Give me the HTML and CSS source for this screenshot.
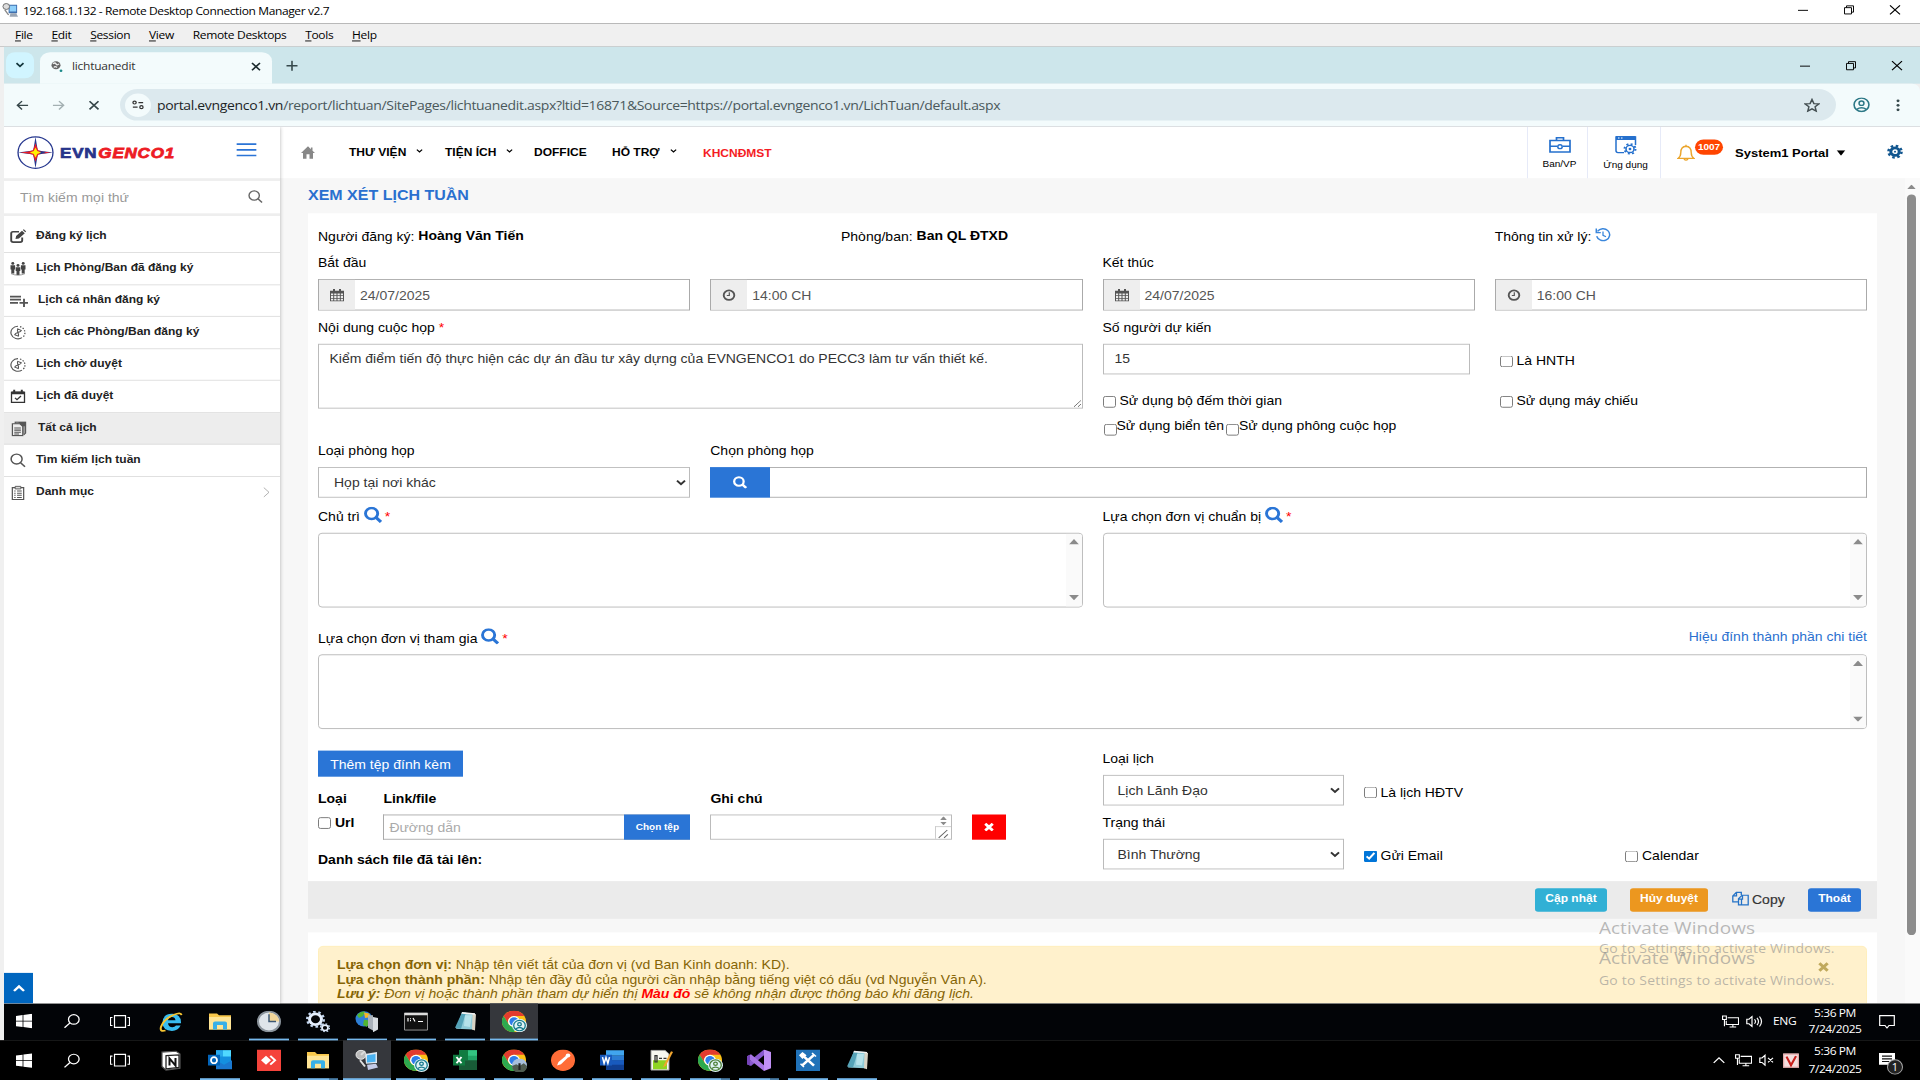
FILE: index.html
```html
<!DOCTYPE html>
<html lang="vi">
<head>
<meta charset="utf-8">
<title>lichtuanedit</title>
<link rel="stylesheet" href="styles.css">
</head>
<body>
<svg class="defs" width="0" height="0" aria-hidden="true">
  <defs>
    <symbol id="search" viewBox="0 0 16 16"><circle cx="6.6" cy="6.6" r="5.5" fill="none" stroke="currentColor" stroke-width="1.5"/><path d="M10.6 10.6 15 15" stroke="currentColor" stroke-width="1.6"/></symbol>
    <symbol id="search-bold" viewBox="0 0 18 18"><circle cx="7.6" cy="7.6" r="6.100" fill="none" stroke="currentColor" stroke-width="2.900"/><path d="M11.5 11.5 17 17" stroke="currentColor" stroke-width="3.300"/></symbol>
    <symbol id="chev" viewBox="0 0 8 6"><path d="M1 1l3 3 3-3" fill="none" stroke="currentColor" stroke-width="1.5"/></symbol>
    <symbol id="tri-up" viewBox="0 0 10 6"><path d="M0 6 5 0l5 6z" fill="#8b8b8b"/></symbol>
    <symbol id="tri-down" viewBox="0 0 10 6"><path d="M0 0h10L5 6z" fill="#8b8b8b"/></symbol>
    <symbol id="calendar" viewBox="0 0 14 14"><path d="M0 2h14v12H0z" fill="#555"/><path d="M3 0h2v3H3zM9 0h2v3H9z" fill="#555"/><path d="M1 5h2.2v2H1zm3.2 0h2.3v2H4.200zm3.300 0h2.300v2H7.500zm3.300 0H13v2h-2.200zM1 8h2.200v2H1zm3.200 0h2.300v2H4.200zm3.300 0h2.300v2H7.500zm3.300 0H13v2h-2.200zM1 11h2.200v2H1zm3.200 0h2.300v2H4.200zm3.300 0h2.300v2H7.500zm3.300 0H13v2h-2.200z" fill="#eee"/></symbol>
    <symbol id="clock" viewBox="0 0 14 14"><circle cx="7" cy="7" r="5.3" fill="none" stroke="#555" stroke-width="1.9"/><path d="M7.300 3.800v3.600H4.800" fill="none" stroke="#555" stroke-width="1.200"/></symbol>
    <symbol id="win-min" viewBox="0 0 12 12"><path d="M1 6.500h10" stroke="currentColor"/></symbol>
    <symbol id="win-max" viewBox="0 0 12 12"><path d="M1.500 3.500h7v7h-7zM3.500 3.500v-2h7v7h-2" fill="none" stroke="currentColor"/></symbol>
    <symbol id="win-x" viewBox="0 0 12 12"><path d="M1 1l10 10M11 1 1 11" stroke="currentColor" stroke-width="1.200"/></symbol>
    <symbol id="timer" viewBox="0 0 16 16"><path d="M8 1a7 7 0 1 0 4 12.700" fill="none" stroke="#555" stroke-width="1.200"/><path d="M10 1.400a7 7 0 0 1 2.500 12" fill="none" stroke="#555" stroke-width="1.300" stroke-dasharray="1.500 1.500"/><path d="M5.500 4.500h5M5.500 11.500h5M6 4.500c0 3 4 4 4 7M10 4.500c0 3-4 4-4 7" fill="none" stroke="#555" stroke-width="1.100" transform="rotate(25 8 8)"/></symbol>
    <symbol id="windows" viewBox="0 0 16 16"><path d="M0 2.300 6.600 1.400v6.200H0zM7.400 1.300 16 0v7.600H7.400zM0 8.400h6.600v6.200L0 13.700zM7.400 8.400H16V16l-8.600-1.300z" fill="#fff"/></symbol>
    <symbol id="tb-search" viewBox="0 0 16 16"><circle cx="9.800" cy="6.200" r="5.300" fill="none" stroke="#fff" stroke-width="1.300"/><path d="M6 10 .5 15.500" stroke="#fff" stroke-width="1.400"/></symbol>
    <symbol id="taskview" viewBox="0 0 20 16"><path d="M4.500 1.500h11v13h-11zM2.500 3.500h-2v9h2M17.500 3.500h2v9h-2" fill="none" stroke="#fff" stroke-width="1.200"/></symbol>
    <symbol id="folder" viewBox="0 0 24 24"><path d="M1 3h8l2 2h12v16H1z" fill="#f8c84c"/><path d="M1 7h22v14H1z" fill="#ffe596"/><path d="M5 21v-7q0-2 2-2h10q2 0 2 2v7h-4v-5H9v5z" fill="#38b0e8"/></symbol>
    <symbol id="chrome" viewBox="0 0 24 24"><circle cx="12" cy="12" r="12" fill="#fbc116"/><path d="M1.600 6A12 12 0 0 1 22.400 6H12a6 6 0 0 0-5.200 9z" fill="#e33b2e"/><path d="M1.600 6A12 12 0 0 0 12 24l5.200-9A6 6 0 0 1 6.800 15z" fill="#2da94f"/><circle cx="12" cy="12" r="6" fill="#fff"/><circle cx="12" cy="12" r="4.600" fill="#2f7de9"/></symbol>
    <symbol id="profile" viewBox="0 0 14 14"><circle cx="7" cy="7" r="7" fill="#dff3f6"/><circle cx="7" cy="7" r="5.400" fill="none" stroke="currentColor" stroke-width="1.200"/><circle cx="7" cy="5.600" r="1.700" fill="none" stroke="currentColor" stroke-width="1.200"/><path d="M3.500 10.500q3.500-3 7 0" fill="none" stroke="currentColor" stroke-width="1.300"/></symbol>
    <symbol id="notepad" viewBox="0 0 24 24"><path d="M9 2 22 3l-2 18-17-1z" fill="#8fcbd8"/><path d="M9 2h4L8 20l-6-1z" fill="#55a3b8"/><path d="M12 5h7l-2 13-6-1z" fill="#b5e2ea"/><path d="M19.500 3l3.500 1-1 18-3-1z" fill="#d8d3c4"/><path d="M9 1.500l13 1.300v1.600L8.500 3.500z" fill="#f1f1f1"/></symbol>
    <symbol id="network" viewBox="0 0 18 16"><path d="M6 3.500h11.500v8H4.500V7M8 14.500h7M11.500 11.500v3" fill="none" stroke="#fff" stroke-width="1.200"/><path d="M.6 1.600h4v4h-4zM2.600 5.600v8" fill="none" stroke="#fff" stroke-width="1.200"/></symbol>
    <symbol id="cross" viewBox="0 0 12 12"><path d="M1.500 1.500l9 9M10.500 1.500l-9 9" stroke="currentColor" stroke-width="3.400"/></symbol>
  </defs>
</svg>

<div class="screen">
  <header class="rdc-title">
    <svg class="rdc-icon" viewBox="0 0 18 18"><path d="M7 3h9v10H7z" fill="#3f6fae"/><path d="M8 4h7v7H8z" fill="#8fd0fa"/><path d="M9 13h6l2 4H8z" fill="#9aa6b5"/><circle cx="4.500" cy="5" r="3.500" fill="#ddd" stroke="#666"/><path d="M3 9l4 6" stroke="#888" stroke-width="1.500"/></svg>
    <span class="rdc-name">192.168.1.132 - Remote Desktop Connection Manager v2.7</span>
    <span class="win-buttons"><svg><use href="#win-min"/></svg><svg><use href="#win-max"/></svg><svg><use href="#win-x"/></svg></span>
  </header>
  <nav class="rdc-menu">
    <span><u>F</u>ile</span><span><u>E</u>dit</span><span><u>S</u>ession</span><span><u>V</u>iew</span><span>Remote Desktops</span><span><u>T</u>ools</span><span><u>H</u>elp</span>
  </nav>

  <div class="remote">
    <div class="tabs">
      <span class="tab-list"><svg><use href="#chev"/></svg></span>
      <div class="tab">
        <svg class="tab-fav" viewBox="0 0 12 13"><circle cx="5" cy="5.500" r="4.500" fill="#666"/><path d="M2 4q2-2 3 0t3 0M3 8q1-2 3 0" stroke="#eee" fill="none" stroke-width="1.400"/><circle cx="10" cy="11.500" r="1.400" fill="#1c8a8a"/></svg>
        <span class="tab-name">lichtuanedit</span>
        <svg class="tab-x" viewBox="0 0 10 10"><path d="M1 1l8 8M9 1 1 9" stroke="#1c2b2e" stroke-width="1.700"/></svg>
      </div>
      <svg class="tab-plus" viewBox="0 0 12 12"><path d="M6 .5v11M.5 6h11" stroke="#36494c" stroke-width="1.600"/></svg>
      <span class="win-buttons inner"><svg><use href="#win-min"/></svg><svg><use href="#win-max"/></svg><svg><use href="#win-x"/></svg></span>
    </div>
    <div class="toolbar">
      <svg class="t-back" viewBox="0 0 14 12"><path d="M13 6H2M6.500 1 1.500 6l5 5" fill="none" stroke="#37474a" stroke-width="1.600"/></svg>
      <svg class="t-fwd" viewBox="0 0 14 12"><path d="M1 6h11M7.500 1l5 5-5 5" fill="none" stroke="#a3b0b2" stroke-width="1.600"/></svg>
      <svg class="t-stop" viewBox="0 0 12 12"><path d="M1.500 1.500l9 9M10.500 1.500l-9 9" stroke="#37474a" stroke-width="1.700"/></svg>
      <div class="omnibox">
        <span class="site-info"><svg viewBox="0 0 14 12"><circle cx="3" cy="3" r="1.900" fill="none" stroke="#333" stroke-width="1.500"/><path d="M7.500 3H13M1 9h5.500" stroke="#333" stroke-width="1.600"/><circle cx="11" cy="9" r="1.900" fill="none" stroke="#333" stroke-width="1.500"/></svg></span>
        <span class="url"><b>portal.evngenco1.vn</b>/report/lichtuan/SitePages/lichtuanedit.aspx?ltid=16871&amp;Source=https://portal.evngenco1.vn/LichTuan/default.aspx</span>
        <svg class="t-star" viewBox="0 0 16 16"><path d="M8 1.500l1.900 4.600 4.900.4-3.700 3.200 1.100 4.800L8 12l-4.200 2.500 1.100-4.800L1.200 6.500l4.900-.4z" fill="none" stroke="#444f52" stroke-width="1.500"/></svg>
      </div>
      <svg class="t-user" viewBox="0 0 16 16"><circle cx="8" cy="8" r="7" fill="none" stroke="#2c7886" stroke-width="1.500"/><circle cx="8" cy="6.300" r="2.300" fill="none" stroke="#2c7886" stroke-width="1.400"/><path d="M3.500 12.800q4.500-3.500 9 0" fill="none" stroke="#2c7886" stroke-width="1.600"/></svg>
      <svg class="t-more" viewBox="0 0 4 14"><circle cx="2" cy="2" r="1.500"/><circle cx="2" cy="7" r="1.500"/><circle cx="2" cy="12" r="1.500"/></svg>
    </div>

    <div class="portal">
      <aside class="side">
        <div class="brand">
          <svg class="brand-mark" viewBox="0 0 36 36"><circle cx="18" cy="18" r="17" fill="#fff" stroke="#27388f" stroke-width="1.300"/><path d="M18 1l2.200 14.800L35 18l-14.800 2.200L18 35l-2.200-14.800L1 18l14.800-2.200z" fill="#27388f"/><path d="M18 8l2.500 7.500L28 18l-7.500 2.500L18 28l-2.500-7.500L8 18l7.500-2.500zM3 18l11-1.500v3zM33 18l-11-1.500v3z" fill="#ed1c24"/><path d="M18 12.500l1.700 3.800 3.800 1.700-3.800 1.700-1.700 3.800-1.700-3.800-3.800-1.700 3.800-1.700z" fill="#fff200"/></svg>
          <span class="brand-name"><b>EVN</b><i>GENCO1</i></span>
          <svg class="burger" viewBox="0 0 21 16"><path d="M0 1.200h21M0 8h21M0 14.800h21" stroke="#2b74d6" stroke-width="1.900"/></svg>
        </div>
        <div class="side-search"><span>Tìm kiếm mọi thứ</span><svg><use href="#search"/></svg></div>
        <ul class="menu">
          <li><svg viewBox="0 0 16 16"><path d="M9 3H3Q1.200 3 1.200 5v7.500q0 2 2 2h7q2 0 2-2V9.500" fill="none" stroke="#444" stroke-width="1.900"/><path d="M5.500 11l.6-3.300L12 1.800l2.800 2.800-5.900 5.800zM12.800 1l1-.9 2.300 2.500-.8.900z" fill="#444"/></svg><span>Đăng ký lịch</span></li>
          <li><svg viewBox="0 0 16 16"><g fill="#444"><circle cx="2.800" cy="2.200" r="1.500"/><circle cx="13.200" cy="2.200" r="1.500"/><circle cx="8" cy="4.400" r="1.500"/><path d="M.5 4.200h4.600V9H4.300v4.500h-3V9H.5zM10.900 4.200h4.600V9h-.8v4.500h-3V9h-.8zM5.700 6.400h4.600v4.300h-.8V15h-3v-4.300h-.8z"/></g><path d="M1 13.500Q8 17 15 13.500" fill="none" stroke="#777" stroke-width=".8"/></svg><span>Lịch Phòng/Ban đã đăng ký</span></li>
          <li class="wide"><svg viewBox="0 0 18 14"><path d="M0 2h11M0 5.500h11M0 9h8M14 4.500v9M9.500 9H18" stroke="#555" stroke-width="1.900"/></svg><span>Lịch cá nhân đăng ký</span></li>
          <li><svg><use href="#timer"/></svg><span>Lịch các Phòng/Ban đăng ký</span></li>
          <li><svg><use href="#timer"/></svg><span>Lịch chờ duyệt</span></li>
          <li><svg viewBox="0 0 16 16"><path d="M1.500 3.500h13v11h-13z" fill="none" stroke="#333" stroke-width="1.300"/><path d="M1.500 2.500h13v3h-13zM3.200.5h2v3h-2zM10.800.5h2v3h-2z" fill="#333"/><path d="M5 9.500l2 2 4-4" fill="none" stroke="#333" stroke-width="1.300"/></svg><span>Lịch đã duyệt</span></li>
          <li class="wide active"><svg viewBox="0 0 16 18"><path d="M4 3V1h11v13l-2 2" fill="#999" stroke="#555" stroke-width="1.200"/><path d="M1 3h8l3 3v11H1z" fill="#eee" stroke="#555" stroke-width="1.300"/><path d="M3 8h7M3 10.500h7M3 13h7M3 15h5" stroke="#555" stroke-width="1.200"/><path d="M7 1h8v5h-3z" fill="#555"/></svg><span>Tất cả lịch</span></li>
          <li><svg class="thin"><use href="#search"/></svg><span>Tìm kiếm lịch tuần</span></li>
          <li><svg viewBox="0 0 16 18"><path d="M2 3h12v14H2z" fill="none" stroke="#555" stroke-width="1.300"/><path d="M5 1.500h6v3H5z" fill="#ddd" stroke="#555"/><path d="M4 7h1.500M7 7h5M4 9.500h1.500M7 9.500h5M4 12h1.500M7 12h5M4 14.500h1.500M7 14.500h5" stroke="#555" stroke-width="1.100"/></svg><span>Danh mục</span><svg class="go" viewBox="0 0 7 12"><path d="M.8.800 6 6 .8 11.200" fill="none" stroke="#999" stroke-width=".8"/></svg></li>
        </ul>
        <span class="to-top"><svg viewBox="0 0 12 8"><path d="M1 7l5-5 5 5" fill="none" stroke="#fff" stroke-width="2.400"/></svg></span>
      </aside>

      <div class="content">
        <div class="topnav">
          <svg class="home" viewBox="0 0 14 14"><path d="M7 0 0 7.500h2V14h3.500V9h3v5H12V7.500h2L11.500 5V1.500h-1.600v1.700z" fill="#888"/></svg>
          <span class="n1">THƯ VIỆN<svg><use href="#chev"/></svg></span>
          <span class="n2">TIỆN ÍCH<svg><use href="#chev"/></svg></span>
          <span class="n3">DOFFICE</span>
          <span class="n4">HỖ TRỢ<svg><use href="#chev"/></svg></span>
          <span class="n5">KHCNĐMST</span>
          <div class="app app-a"><svg viewBox="0 0 22 18"><path d="M1 4h20v13H1zM7.500 4V1h7v3M1 10.500h7M14 10.500h7" fill="none" stroke="#2570cd" stroke-width="1.700"/><circle cx="11" cy="11" r="2.200" fill="none" stroke="#2570cd" stroke-width="1.500"/></svg>Ban/VP</div>
          <div class="app app-b"><svg viewBox="0 0 22 21"><path d="M9 18.500H3q-2 0-2-2V1h19.500v9" fill="none" stroke="#2570cd" stroke-width="1.500"/><path d="M1 0h19.500v4.500H1z" fill="#2570cd"/><path d="M3 2.300h1.500M6 2.300h1.500" stroke="#fff" stroke-width="1.300"/><circle cx="15" cy="14.500" r="4" fill="#fff" stroke="#2570cd" stroke-width="1.600"/><circle cx="15" cy="14.500" r="5.500" fill="none" stroke="#2570cd" stroke-width="2" stroke-dasharray="2 2.320"/><circle cx="15" cy="14.500" r="1.400" fill="#2570cd"/></svg>Ứng dụng</div>
          <div class="account">
            <svg class="bell" viewBox="0 0 18 20"><path d="M9 1.200v1.500M1 16.500q2.800-2 2.800-6.500 0-6.500 5.200-7 5.200.5 5.200 7 0 4.500 2.800 6.500zM7 17q2 3 4 0" fill="none" stroke="#eba52c" stroke-width="1.400"/></svg>
            <span class="badge">1007</span>
            <b>System1 Portal</b>
            <svg class="caret" viewBox="0 0 10 7"><path d="M0 0h10L5 7z"/></svg>
            <svg class="gear" viewBox="0 0 16 16"><circle cx="8" cy="8" r="4.200" fill="none" stroke="#11568f" stroke-width="3"/><circle cx="8" cy="8" r="6.500" fill="none" stroke="#11568f" stroke-width="2.600" stroke-dasharray="2.550 2.550"/><circle cx="8" cy="8" r="1" fill="#11568f"/></svg>
          </div>
        </div>

        <div class="scroller">
          <main class="page">
            <h1>XEM XÉT LỊCH TUẦN</h1>
            <section class="panel">
              <div class="row r1">
                <div class="c4">Người đăng ký: <b>Hoàng Văn Tiến</b></div>
                <div class="c5">Phòng/ban: <b>Ban QL ĐTXD</b></div>
                <div class="c3">Thông tin xử lý: <svg class="history" viewBox="0 0 16 16"><path d="M2.500 4.200A6.600 6.600 0 1 1 1.700 9.500M1.300 1v4.500h4.500" fill="none" stroke="#3b87dc" stroke-width="1.500"/><path d="M8 4.200V8.500l3 1.500" fill="none" stroke="#3b87dc" stroke-width="1.300"/></svg></div>
              </div>
              <div class="row r2">
                <div class="c3"><label>Bắt đầu</label><div class="group"><span class="addon"><svg><use href="#calendar"/></svg></span><span>24/07/2025</span></div></div>
                <div class="c3"><label></label><div class="group"><span class="addon"><svg><use href="#clock"/></svg></span><span>14:00 CH</span></div></div>
                <div class="c3"><label>Kết thúc</label><div class="group"><span class="addon"><svg><use href="#calendar"/></svg></span><span>24/07/2025</span></div></div>
                <div class="c3"><label></label><div class="group"><span class="addon"><svg><use href="#clock"/></svg></span><span>16:00 CH</span></div></div>
              </div>
              <div class="row r3">
                <div class="c6"><label>Nội dung cuộc họp <em>*</em></label><textarea class="subject">Kiểm điểm tiến độ thực hiện các dự án đầu tư xây dựng của EVNGENCO1 do PECC3 làm tư vấn thiết kế.</textarea></div>
                <div class="c6 people">
                  <label>Số người dự kiến</label>
                  <div class="pair"><div class="field">15</div><span class="check"><input type="checkbox">Là HNTH</span></div>
                  <div class="pair p2"><span class="check first"><input type="checkbox">Sử dụng bộ đếm thời gian</span><span class="check"><input type="checkbox">Sử dụng máy chiếu</span></div>
                  <div class="tight"><input type="checkbox"><span>Sử dụng biển tên</span><input type="checkbox"><span>Sử dụng phông cuộc họp</span></div>
                </div>
              </div>
              <div class="row r4">
                <div class="c3"><label>Loại phòng họp</label><select><option>Họp tại nơi khác</option></select></div>
                <div class="c9"><label>Chọn phòng họp</label><div class="room"><span class="room-btn"><svg><use href="#search-bold"/></svg></span><span class="room-in"></span></div></div>
              </div>
              <div class="row r5">
                <div class="c6"><label>Chủ trì <svg><use href="#search-bold"/></svg> <em>*</em></label><div class="box"><span class="bar"><svg><use href="#tri-up"/></svg><svg><use href="#tri-down"/></svg></span></div></div>
                <div class="c6"><label>Lựa chọn đơn vị chuẩn bị <svg><use href="#search-bold"/></svg> <em>*</em></label><div class="box"><span class="bar"><svg><use href="#tri-up"/></svg><svg><use href="#tri-down"/></svg></span></div></div>
              </div>
              <div class="row r6">
                <div class="c12"><label>Lựa chọn đơn vị tham gia <svg><use href="#search-bold"/></svg> <em>*</em><a>Hiệu đính thành phần chi tiết</a></label><div class="box"><span class="bar"><svg><use href="#tri-up"/></svg><svg><use href="#tri-down"/></svg></span></div></div>
              </div>
              <div class="row r7">
                <div class="c6 files">
                  <span class="add-file">Thêm tệp đính kèm</span>
                  <div class="frow heads"><b class="f1">Loại</b><b class="f5">Link/file</b><b class="f4">Ghi chú</b></div>
                  <div class="frow">
                    <div class="f1 url-check"><input type="checkbox"><b>Url</b></div>
                    <div class="f5 path"><span>Đường dẫn</span><b>Chọn tệp</b></div>
                    <div class="f4"><div class="note"><span class="mini"><svg><use href="#tri-up"/></svg><svg><use href="#tri-down"/></svg></span><span class="grip"><svg viewBox="0 0 12 12"><path d="M2 11 10 3M7 11l3.500-3.500" stroke="#666" fill="none"/></svg></span></div></div>
                    <div class="del"><svg><use href="#cross"/></svg></div>
                  </div>
                  <b class="list-title">Danh sách file đã tải lên:</b>
                </div>
                <div class="c6 kinds">
                  <label>Loại lịch</label>
                  <div class="thirds"><select><option>Lịch Lãnh Đạo</option></select><span class="check"><input type="checkbox">Là lịch HĐTV</span></div>
                  <label class="second">Trạng thái</label>
                  <div class="thirds"><select><option>Bình Thường</option></select><span class="check"><input type="checkbox" checked>Gửi Email</span><span class="check"><input type="checkbox">Calendar</span></div>
                </div>
              </div>
            </section>
            <div class="actions">
              <span class="btn cyan">Cập nhật</span><span class="btn orange">Hủy duyệt</span>
              <span class="copy"><svg viewBox="0 0 17 16"><path d="M6.500 11.500H.8V5l3.500-4h5v3M4.500 1v4H1M9.500 8.500V15h6.700V4.200H10L6.500 8v7h3M10.500 4.500V8.500h-4" fill="none" stroke="#2573c7" stroke-width="1.300"/></svg>Copy</span><span class="btn blue">Thoát</span>
            </div>
            <section class="panel help">
              <div class="alert"><div><b>Lựa chọn đơn vị:</b> Nhập tên viết tắt của đơn vị (vd Ban Kinh doanh: KD).<br><b>Lựa chọn thành phần:</b> Nhập tên đầy đủ của người cần nhập bằng tiếng việt có dấu (vd Nguyễn Văn A).<br><i><b>Lưu ý:</b> Đơn vị hoặc thành phần tham dự hiển thị <b class="red">Màu đỏ</b> sẽ không nhận được thông báo khi đăng lịch.</i></div><svg><use href="#cross"/></svg></div>
            </section>
          </main>
          <div class="scrollbar"><svg><use href="#tri-up"/></svg><span></span></div>
        </div>
      </div>
    </div>

    <footer class="taskbar inner-bar">
      <span class="tb sys"><svg class="s16"><use href="#windows"/></svg></span><span class="tb sys"><svg class="s16"><use href="#tb-search"/></svg></span><span class="tb sys"><svg class="s20"><use href="#taskview"/></svg></span>
      <span class="tb"><svg viewBox="0 0 24 24"><path d="M22 14H9q.5 4.500 4.500 4.500 2 0 3.500-2h4.600Q19 22.500 13 22.500 3.500 22 3.500 13 4 3.500 13 3.500 22.500 4 22 14zM9 10.500h7.500Q16 7 12.800 7 9.500 7 9 10.500z" fill="#38bdf0"/><path d="M22.500 5Q22 1 15 4.500 5 9 2 18q-1.500 6 4.500 4" fill="none" stroke="#f7c531" stroke-width="2"/></svg></span>
      <span class="tb"><svg><use href="#folder"/></svg></span>
      <span class="tb on"><svg viewBox="0 0 24 24"><circle cx="12" cy="12" r="11" fill="#dfe5ea" stroke="#8b949c" stroke-width="2"/><path d="M12 12V2a10 10 0 0 1 10 10z" fill="#f3d79a"/><path d="M12 4v8h7" fill="none" stroke="#3d5874" stroke-width="1.500"/></svg></span>
      <span class="tb on"><svg viewBox="0 0 24 24"><circle cx="9.500" cy="9.500" r="6" fill="none" stroke="#e4eefc" stroke-width="3"/><circle cx="9.500" cy="9.500" r="8.300" fill="none" stroke="#c5d8f0" stroke-width="2.400" stroke-dasharray="2.600 2.610"/><circle cx="19" cy="19" r="3" fill="none" stroke="#e4eefc" stroke-width="1.800"/><circle cx="19" cy="19" r="4.400" fill="none" stroke="#c5d8f0" stroke-width="1.600" stroke-dasharray="1.700 1.750"/></svg></span>
      <span class="tb on"><svg viewBox="0 0 24 24"><circle cx="9" cy="9" r="8.500" fill="#2e7fd6"/><path d="M2 5q4-5 8-4l-2 5-4 2zM9 10l6 1-3 7-4-2z" fill="#51b531"/><path d="M9 2l5 1 2 4-6 1z" fill="#f4b727"/><path d="M13 5h5v17l-5-3z" fill="#aab2ba"/><path d="M18 7l5 1v13l-5 3z" fill="#d8dde1"/></svg></span>
      <span class="tb on"><svg viewBox="0 0 24 24"><path d="M.5 2.500h23v19H.5z" fill="#111" stroke="#999"/><path d="M.5 2.500h23V5H.5z" fill="#ddd"/><path d="M4 8v4M6 9h1M6 11h1M9 8l2 4M14 12h5" stroke="#fff" stroke-width="1.200"/></svg></span>
      <span class="tb on"><svg><use href="#notepad"/></svg></span>
      <span class="tb on active"><svg><use href="#chrome"/></svg><svg class="who teal"><use href="#profile"/></svg></span>
      <span class="tray"><svg class="net"><use href="#network"/></svg><svg class="snd" viewBox="0 0 17 14"><path d="M.8 4.500H3L6 1.500v11L3 9.500H.8zM8.500 4.500q2 2.500 0 5M11 3q3 4 0 8M13.500 1.500q4 5.500 0 11" fill="none" stroke="#fff" stroke-width="1.200"/></svg><span class="lang">ENG</span><span class="time">5:36 PM<br>7/24/2025</span><svg class="msg" viewBox="0 0 16 16"><path d="M.7 1.500h14.600v11H10l-2 2.700-2-2.700H.7z" fill="none" stroke="#fff" stroke-width="1.200"/></svg></span>
    </footer>
  </div>

  <footer class="taskbar outer-bar">
    <span class="tb sys"><svg class="s16"><use href="#windows"/></svg></span><span class="tb sys"><svg class="s16"><use href="#tb-search"/></svg></span><span class="tb sys"><svg class="s20"><use href="#taskview"/></svg></span>
    <span class="tb"><svg viewBox="0 0 24 24"><path d="M3 3l14-1 4 3v16L7 23l-4-4z" fill="#fff" stroke="#555" stroke-width="1.200"/><path d="M7 7l13-1v14L7 21.500z" fill="#fff" stroke="#222" stroke-width="1.300"/><path d="M10.500 18v-8l6 8v-8.500" fill="none" stroke="#111" stroke-width="2"/></svg></span>
    <span class="tb on"><svg viewBox="0 0 24 24"><path d="M8 1h15v20H8z" fill="#1490df"/><path d="M15 1h8v7h-8z" fill="#50d9ff"/><path d="M8 1h7v7H8z" fill="#28a8ea"/><path d="M8 12l8 5 8-5v10H8z" fill="#1a78cf"/><path d="M0 6h12v12H0z" fill="#0364b8"/><ellipse cx="6" cy="12" rx="3" ry="3.400" fill="none" stroke="#fff" stroke-width="1.800"/></svg></span>
    <span class="tb"><svg viewBox="0 0 24 24"><path d="M0 0h24v24H0z" fill="#f5433b"/><path d="M9 7l5 5-5 5-5-5zM12.500 7.800 14 6.500l5.500 5.500-5.500 5.500-1.500-1.300L16.700 12z" fill="#fff"/></svg></span>
    <span class="tb on multi"><svg><use href="#folder"/></svg></span>
    <span class="tb on active"><svg viewBox="0 0 24 24"><path d="M10 5l12-2v12l-11 1z" fill="#dce7f0"/><path d="M12 6.500l8.500-1.300v8.600L12 14.500z" fill="#4ab2f1"/><path d="M12 17l9-1 2 4-10 3z" fill="#c3cbe8"/><circle cx="6" cy="6" r="5" fill="#bbb" stroke="#eee"/><path d="M6 6l4-4M5 12l5 7" stroke="#ddd" stroke-width="2"/></svg></span>
    <span class="tb on multi"><svg><use href="#chrome"/></svg><svg class="who teal"><use href="#profile"/></svg></span>
    <span class="tb on"><svg viewBox="0 0 24 24"><path d="M6 1h18v22H6z" fill="#21a366"/><path d="M6 1h9v11H6z" fill="#107c41"/><path d="M6 12h18v11H6z" fill="#185c37"/><path d="M15 1h9v6h-9z" fill="#33c481"/><path d="M0 6h12v12H0z" fill="#107c41"/><path d="M3.500 8.500l5 7M8.500 8.500l-5 7" stroke="#fff" stroke-width="1.900"/></svg></span>
    <span class="tb on"><svg><use href="#chrome"/></svg><svg class="who" viewBox="0 0 14 14"><circle cx="7" cy="7" r="7" fill="#a8bfdc"/><path d="M0 8l4-2 3 2 4-3 3 3a7 7 0 0 1-14 0z" fill="#505c50"/><path d="M6 5h2v7H6z" fill="#222"/></svg></span>
    <span class="tb on"><svg viewBox="0 0 24 24"><circle cx="12" cy="12" r="12" fill="#ff6c37"/><path d="M6 18l1.500-4L15 7l2 2-7 7.500z" fill="#fff"/><circle cx="17" cy="6.800" r="2.300" fill="#fff"/></svg></span>
    <span class="tb on"><svg viewBox="0 0 24 24"><path d="M6 1h18v6H6z" fill="#41a5ee"/><path d="M6 7h18v5.500H6z" fill="#2b7cd3"/><path d="M6 12h18v6H6z" fill="#185abd"/><path d="M6 17h18v6H6z" fill="#103f91"/><path d="M0 6h12v12H0z" fill="#185abd"/><path d="M2.500 8.500l1.600 7L6 9l1.900 6.500 1.600-7" fill="none" stroke="#fff" stroke-width="1.500"/></svg></span>
    <span class="tb on"><svg viewBox="0 0 24 24"><path d="M2 1h14l4 4v18H2z" fill="#f7f7f0" stroke="#999"/><path d="M4 12h14v10H4z" fill="#8fd422"/><path d="M6 7v7h2V7zM10 10h3M14.500 10h3" fill="none" stroke="#333" stroke-width="1.300"/><path d="M22 2 15 17l-1 3 3-2 7-15z" fill="#f0a52e"/></svg></span>
    <span class="tb on multi"><svg><use href="#chrome"/></svg><svg class="who green"><use href="#profile"/></svg></span>
    <span class="tb on multi"><svg viewBox="0 0 24 24"><path d="M17 0l7 3v18l-7 3z" fill="#c190f5"/><path d="M17 0v6.500L4 18.500 0 16.500V15z" fill="#8a5ad0"/><path d="M17 24v-6.500L4 5.500 0 7.500V9z" fill="#a775e4"/><path d="M0 7.500 3 6v12l-3-1.500z" fill="#7543b8"/></svg></span>
    <span class="tb on"><svg viewBox="0 0 24 24"><path d="M0 0h24v24H0z" fill="#2072b8"/><path d="M6 6l12 12M18 6 6 18" stroke="#fff" stroke-width="2.600"/><path d="M4 6.500 6.500 4l3 2.500-3 3zM16 4l4 4M4.500 16l3.500 3.500" stroke="#fff" fill="#fff" stroke-width="1.500"/></svg></span>
    <span class="tb on"><svg><use href="#notepad"/></svg></span>
    <span class="tray"><svg class="up" viewBox="0 0 12 8"><path d="M.7 7 6 1.500 11.300 7" fill="none" stroke="#fff" stroke-width="1.300"/></svg><svg class="net"><use href="#network"/></svg><svg class="mute" viewBox="0 0 15 14"><path d="M.8 4.500H3L6 1.500v11L3 9.500H.8zM9 4.500l5 5M14 4.500l-5 5" fill="none" stroke="#fff" stroke-width="1.200"/></svg><svg class="vkey" viewBox="0 0 16 16"><path d="M0 0h16v16H0z" fill="#f5dede"/><path d="M.7.700h14.600v14.600H.7z" fill="none" stroke="#d99"/><path d="M3.500 3.500 8 13l5-10" fill="none" stroke="#c8201c" stroke-width="2.200"/></svg><span class="time">5:36 PM<br>7/24/2025</span><span class="notice"><svg class="msg" viewBox="0 0 16 16"><path d="M0 0h16v13h-4l-2 2-2-2H0z" fill="#fff"/><path d="M3 3.500h10M3 6.500h10M3 9.500h7" stroke="#111" stroke-width="1.200"/></svg><i>1</i></span></span>
  </footer>

  <div class="watermark w1"><p>Activate Windows</p><small>Go to Settings to activate Windows.</small></div>
  <div class="watermark w2"><p>Activate Windows</p><small>Go to Settings to activate Windows.</small></div>
</div>
</body>
</html>
```

FILE: styles.css
```css
* { box-sizing: border-box; }
html, body { margin: 0; width: 1920px; height: 1080px; overflow: hidden; background: #000; }
svg { display: block; flex: none; }
.defs { position: absolute; }

/* 16:10 desktop shown in a 16:9 viewport */
.screen {
  position: relative;
  width: 1920px; height: 1200px;
  margin-bottom: -120px;
  overflow: hidden;
  display: flex; flex-direction: column;
  transform: scaleY(.9); transform-origin: 0 0;
  background: #000; color: #000;
  font: 14px/20px "Liberation Sans", Arial, sans-serif;
}

/* Connection manager window */
.rdc-title { height: 26px; flex: none; background: #fff; display: flex; align-items: center; padding-left: 2px; font: 12px/24px "Open Sans", sans-serif; }
.rdc-icon { width: 17px; height: 18px; margin: -4px 4px 0 0; }
.rdc-name { letter-spacing: -.38px; margin-top: -1px; }
.win-buttons { margin: -4px 19px 0 auto; display: flex; gap: 34px; color: #000; }
.win-buttons svg { width: 12px; height: 12px; }
.rdc-menu { height: 26px; flex: none; background: #f0f0f0; display: flex; gap: 18.700px; padding-left: 15px; font: 12px/25px "Open Sans", sans-serif; letter-spacing: -.32px; }
.rdc-menu u { text-underline-offset: 2px; }

.remote { height: 1104px; flex: none; background: #f0f0f0; padding-left: 4px; display: flex; flex-direction: column; }

/* Browser */
.tabs { height: 41px; flex: none; background: #cde6eb; display: flex; align-items: center; }
.tab-list { width: 28px; height: 29px; margin-left: 2px; border-radius: 9px; background: #d1f5ff; display: flex; align-items: center; justify-content: center; color: #16393f; }
.tab-list svg { width: 10px; height: 7px; }
.tab { width: 232px; height: 35px; margin: 6px 0 0 6px; align-self: flex-start; border-radius: 10px 10px 0 0; background: #f3fbfc; display: flex; align-items: center; padding: 0 11px 4px 11px; }
.tab-fav { width: 12px; height: 13px; }
.tab-name { margin-left: 9px; font: 12px/20px "Open Sans", sans-serif; color: #333; letter-spacing: -.25px; }
.tab-x { width: 10px; height: 10px; margin-left: auto; }
.tab-plus { width: 12px; height: 12px; margin-left: 14px; }
.win-buttons.inner { margin: 0 17px 0 auto; }
.toolbar { height: 48px; flex: none; background: #f3fbfc; border-bottom: 1px solid #d5dadd; border-radius: 0 8px 0 0; display: flex; align-items: center; }
.t-back { width: 13px; height: 12px; margin-left: 12px; }
.t-fwd { width: 13px; height: 12px; margin-left: 23px; }
.t-stop { width: 12px; height: 12px; margin-left: 23px; }
.omnibox { width: 1716px; height: 35px; margin-left: 20px; border-radius: 18px; background: #dce9ee; display: flex; align-items: center; padding: 0 16px 0 5px; }
.site-info { width: 26px; height: 26px; border-radius: 50%; background: #f3fbfc; display: flex; align-items: center; justify-content: center; }
.site-info svg { width: 12px; height: 11px; }
.url { margin-left: 6px; font: 14px/24px "Open Sans", sans-serif; color: #4a585b; letter-spacing: -.34px; white-space: nowrap; }
.url b { font-weight: 400; color: #1c2426; }
.t-star { width: 16px; height: 16px; margin-left: auto; }
.t-user { width: 17px; height: 17px; margin-left: 17px; }
.t-more { width: 4px; height: 14px; margin-left: 26px; fill: #36494c; }

/* Portal */
.portal { height: 974px; flex: none; display: flex; background: #f7f7f7; overflow: hidden; }
.side { width: 276px; flex: none; background: #fff; box-shadow: 0 0 4px rgba(0,0,0,.3); display: flex; flex-direction: column; z-index: 1; }
.brand { height: 57px; flex: none; display: flex; align-items: center; padding: 0 23px 0 13px; }
.brand-mark { width: 37px; height: 37px; }
.brand-name { margin-left: 6px; font-size: 17px; line-height: 20px; font-weight: 700; letter-spacing: .8px; }
.brand-name b { color: #27348b; -webkit-text-stroke: .8px #27348b; margin-right: 1px; }
.brand-name i { color: #ed1c24; -webkit-text-stroke: .9px #ed1c24; letter-spacing: .8px; }
.burger { width: 21px; height: 15px; margin: -6px 0 0 auto; }
.side-search { height: 42px; flex: none; border-top: 3px solid #eee; border-bottom: 3px solid #eee; display: flex; align-items: center; justify-content: space-between; padding: 0 17px 0 16px; color: #999; }
.side-search svg { width: 15px; height: 15px; color: #666; margin-top: -2px; }
.menu { list-style: none; margin: 4px 0 0; padding: 0; font-size: 12px; font-weight: 700; color: #222; }
.menu li { height: 35.500px; display: flex; align-items: center; gap: 10px; padding: 0 10px 2px 6px; border-bottom: 1px solid #ddd; }
.menu li:first-child { height: 37px; }
.menu li:last-child { border: 0; padding-bottom: 3px; }
.menu li > svg:first-child { width: 16px; height: 17px; margin-top: 3px; color: #555; }
.menu li.wide > svg:first-child { width: 18px; }
.menu li.active { background: #ededed; }
.menu .go { width: 7px; height: 12px; margin: 3px 0 0 auto; }
.to-top { width: 29px; height: 34px; margin-top: auto; background: #0066bf; display: flex; align-items: center; justify-content: center; }
.to-top svg { width: 12px; height: 8px; }

.content { flex: 1; min-width: 0; display: flex; flex-direction: column; }
.topnav { height: 57px; flex: none; background: #fff; display: flex; align-items: center; font-size: 12px; font-weight: 700; white-space: nowrap; padding-left: 21px; }
.topnav > span { display: flex; align-items: center; justify-content: space-between; flex: none; margin-top: -1px; }
.topnav > span svg { width: 7px; height: 6px; margin-top: -2px; }
.home { width: 14px; height: 15px; margin-right: 34px; }
.n1 { width: 96px; } .n1 svg { margin-right: 22px; }
.n2 { width: 89px; } .n2 svg { margin-right: 21px; }
.n3 { width: 78px; }
.n4 { width: 91px; } .n4 svg { margin-right: 26px; }
.n5 { color: #f41c24; padding-top: 2px; }
.app { height: 57px; border-left: 1px solid #e6eaf8; font-size: 10px; line-height: 12px; font-weight: 400; display: flex; flex-direction: column; align-items: center; justify-content: flex-end; padding-bottom: 9px; gap: 7px; }
.app-a { width: 60px; margin-left: auto; padding-left: 4px; }
.app-b { width: 73px; gap: 6px; padding: 0 0 8px 3px; }
.app-a svg { width: 22px; height: 18px; }
.app-b svg { width: 22px; height: 21px; }
.account { width: 260px; height: 57px; border-left: 1px solid #e6eaf8; display: flex; align-items: center; padding-left: 16px; font-size: 13px; }
.bell { width: 18px; height: 21px; }
.badge { width: 28px; height: 17px; margin: -13px 12px 0 0; border-radius: 9px; background: #ff4500; color: #fff; font-size: 10px; line-height: 17px; text-align: center; }
.caret { width: 10px; height: 6px; margin-left: 7px; }
.gear { width: 16px; height: 17px; margin: -2px 0 0 41px; }

.scroller { flex: 1; min-height: 0; display: flex; }
.page { flex: 1; padding: 0 28px 0 28px; overflow: hidden; }
h1 { margin: 0; height: 39px; padding-top: 9px; font-size: 16px; line-height: 20px; color: #2a70cf; }
.scrollbar { width: 15px; background: #fafafa; display: flex; flex-direction: column; align-items: center; padding: 7px 2px 0 0; }
.scrollbar svg { width: 9px; height: 5px; }
.scrollbar span { width: 9px; height: 823px; margin-top: 6px; border-radius: 5px; background: #8b8b8b; }
.panel { background: #fff; }
section.panel:first-of-type { height: 742px; padding-top: 16px; }
.row { display: grid; grid-template-columns: repeat(12, 1fr); }
.row > div { padding: 0 10px; min-width: 0; }
.c3 { grid-column: span 3; } .c4 { grid-column: span 4; } .c5 { grid-column: span 5; } .c6 { grid-column: span 6; } .c9 { grid-column: span 9; } .c12 { grid-column: span 12; }
.r1 { height: 29px; } .r2 { height: 72px; } .r3 { height: 137px; } .r4 { height: 73px; } .r5, .r6 { height: 135px; } .r7 { height: 144px; }
.r1 b { vertical-align: 1px; line-height: 1; }
.r1 svg { display: inline-block; width: 16px; height: 16px; vertical-align: -1px; }
label { display: block; height: 28px; line-height: 20px; white-space: nowrap; }
label em { color: #f00; font-style: normal; }
label svg { display: inline-block; width: 18px; height: 18px; color: #2a75d6; vertical-align: -2px; margin: -2px -1px 0 0; }
label a { float: right; color: #2a70cf; margin-top: -2px; }
.group { height: 35px; border: 1px solid #aaa; display: flex; align-items: center; color: #555; background: #fff; line-height: 30px; }
.addon { width: 36px; height: 100%; background: #eee; display: flex; align-items: center; justify-content: center; margin-right: 5px; }
.addon svg { width: 14px; height: 14px; }
textarea { display: block; width: 100%; height: 72px; border: 1px solid #bbb; padding: 5px 10.500px; margin: 0; font: 14px/20px "Liberation Sans", Arial, sans-serif; color: #333; resize: vertical; overflow: hidden; }
.pair { display: flex; height: 54px; align-items: flex-start; }
.field { width: 367px; height: 34px; border: 1px solid #bbb; padding: 5px 11px; color: #333; margin-right: 30px; flex: none; }
.check { display: flex; gap: 4px; align-items: center; height: 20px; margin-top: 8.500px; white-space: nowrap; }
input { width: 13px; height: 13px; margin: 2px 0 0; flex: none; accent-color: #0075d8; }
.p2 { height: 28px; }
.p2 .check { margin-top: -1px; }
.p2 .first { width: 397px; }
.tight { display: flex; padding-left: 1px; white-space: nowrap; margin-top: -1px; }
.tight input { margin-top: 8px; }
.tight span { margin-right: 2px; }
select { width: 100%; height: 34px; margin: 0; border: 1px solid #bbb; border-radius: 0; background: #fff; color: #333; padding: 0 0 1px 11px; font: 14px "Liberation Sans", Arial, sans-serif; }
.room { display: flex; height: 34px; }
.room-btn { width: 60px; background: #2a75d6; color: #fff; display: flex; align-items: center; justify-content: center; }
.room-btn svg { width: 14px; height: 14px; }
.room-in { flex: 1; border: 1px solid #aaa; border-left: 0; }
.box { height: 83px; border: 1px solid #bbb; border-radius: 4px; display: flex; justify-content: flex-end; overflow: hidden; }
.bar { width: 16px; background: #fafafa; display: flex; flex-direction: column; align-items: center; justify-content: space-between; padding: 6px 0 7px; }
.bar svg { width: 10px; height: 6px; }
.add-file { display: block; width: 145px; height: 29px; background: #2a75d6; color: #fff; text-align: center; line-height: 30px; }
.frow { display: flex; height: 28px; }
.heads { margin-top: 14px; line-height: 20px; }
.f1 { width: 65.400px; flex: none; } .f5 { width: 307px; margin-right: 20px; flex: none; } .f4 { width: 242px; margin-right: 20px; flex: none; }
.url-check { display: flex; gap: 4px; line-height: 18px; margin-top: -1px; padding-top: 1px; }
.url-check input { margin-top: 3px; }
.path { display: flex; border: 1px solid #aaa; border-right: 0; line-height: 26px; color: #aaa; padding-left: 5px; justify-content: space-between; }
.path b { width: 66px; margin: -1px 0; line-height: 28px; background: #2a75d6; color: #fff; font-size: 10px; text-align: center; }
.note { height: 28px; border: 1px solid #bbb; display: flex; flex-direction: column; align-items: flex-end; }
.mini { width: 15px; height: 12px; flex: none; display: flex; flex-direction: column; align-items: center; justify-content: space-around; }
.mini svg { width: 7px; height: 4px; }
.grip { width: 16px; height: 14px; border: 1px solid #ccc; border-width: 1px 0 0 1px; }
.grip svg { width: 14px; height: 13px; }
.del { width: 34px; height: 28px; background: #f00; color: #fff; display: flex; align-items: center; justify-content: center; }
.del svg { width: 10px; height: 10px; }
.list-title { display: block; margin-top: 12px; }
.kinds label { margin-top: -1px; }
.kinds label.second { margin-top: 9px; }
.thirds { display: flex; height: 34px; }
.thirds select { width: 241px; margin-right: 20px; padding-left: 10px; flex: none; }
.thirds .check { width: 261.500px; flex: none; }
.thirds .check + .check { width: auto; }
.actions { height: 42px; background: #ebebeb; display: flex; justify-content: flex-end; align-items: center; padding-right: 16px; }
.btn { height: 26px; border-radius: 3px; color: #fff; font-size: 12px; font-weight: 700; line-height: 23px; text-align: center; }
.cyan { width: 72px; background: #31b0d5; margin-right: 23px; }
.orange { width: 78px; background: #ec971f; margin-right: 24px; }
.blue { width: 53px; background: #2a75d6; }
.copy { width: 76px; display: flex; align-items: center; gap: 3px; color: #333; margin-top: -2px; -webkit-text-stroke: .2px #333; }
.copy svg { width: 17px; height: 17px; margin-top: -2px; }
.help { margin-top: 15px; padding: 15px 10px 0; height: 130px; }
.alert { height: 110px; border: 1px solid #ffeeba; border-radius: 5px; background: #fff1cc; color: #856404; padding: 12px 18px; line-height: 16.200px; display: flex; justify-content: space-between; }
.alert svg { width: 11px; height: 11px; margin: 5px 19px; color: #c0a95c; }
.red { color: #f00; }

/* Taskbars */
.taskbar { flex: none; display: flex; background: #020407; color: #fff; }
.inner-bar { height: 41px; }
.inner-bar .tb > svg { margin-top: -2px; }
.outer-bar { height: 44px; background: #000; }
.tb { width: 48px; height: 100%; margin-right: 1px; display: flex; align-items: center; justify-content: center; position: relative; flex: none; }
.tb svg { width: 24px; height: 24px; }
.tb .s16 { width: 16px; height: 17px; }
.tb .s20 { width: 20px; height: 16px; }
.sys { margin-right: 0; }
.inner-bar .sys:first-child { width: 44px; }
.inner-bar .sys:first-child svg { margin-left: -4px; }
.outer-bar .sys:nth-child(3) { margin-right: 3px; }
.inner-bar .sys:nth-child(3) { margin-right: 3px; }
.on::after { content: ""; position: absolute; left: 4px; right: 4px; bottom: 0; height: 2px; background: #76b9ed; }
.multi::after { background: linear-gradient(90deg, #76b9ed 31px, #4b7fa8 31px); }
.active.tb { background: #35373c; }
.active.tb::after { left: 0; right: 0; }
.tb svg.who { position: absolute; left: 22px; width: 15px; height: 15px; top: calc(50% - 2px); }
.teal { color: #16798c; }
.green { color: #4d7f38; }
.tray { margin-left: auto; display: flex; align-items: center; font: 12px/18px "Open Sans", sans-serif; }
.inner-bar .tray { padding-bottom: 2px; }
.net { width: 17px; height: 16px; }
.snd { width: 17px; height: 14px; margin-left: 7px; }
.lang { margin-left: 10px; letter-spacing: -.4px; width: 24px; }
.time { width: 56px; margin-left: 10px; text-align: center; letter-spacing: -.42px; }
.outer-bar .time { line-height: 20px; }
.msg { width: 16px; height: 16px; }
.inner-bar .msg { margin: 0 25px 0 16px; }
.up { width: 12px; height: 8px; margin-right: 10px; }
.mute { width: 15px; height: 14px; margin: 0 9px 0 7px; }
.vkey { width: 16px; height: 17px; margin-right: -2px; }
.notice { position: relative; margin: 0 25px 0 16px; }
.notice i { position: absolute; left: 8px; top: 7px; width: 16px; height: 17px; border-radius: 50%; background: #222; border: 1px solid #aaa; font-style: normal; font-size: 11px; line-height: 15px; text-align: center; }

.watermark { position: absolute; left: 1599px; color: rgba(140,140,140,.6); font-family: "Open Sans", sans-serif; font-weight: 400; white-space: nowrap; }
.watermark p { margin: 0; font-size: 19px; line-height: 24px; }
.watermark small { display: block; font-size: 14px; line-height: 20px; letter-spacing: .18px; }
.w1 { top: 1019px; }
.w2 { top: 1052px; }
.w1 small { margin-top: 1px; }
.w2 small { margin-top: 3px; }
```
